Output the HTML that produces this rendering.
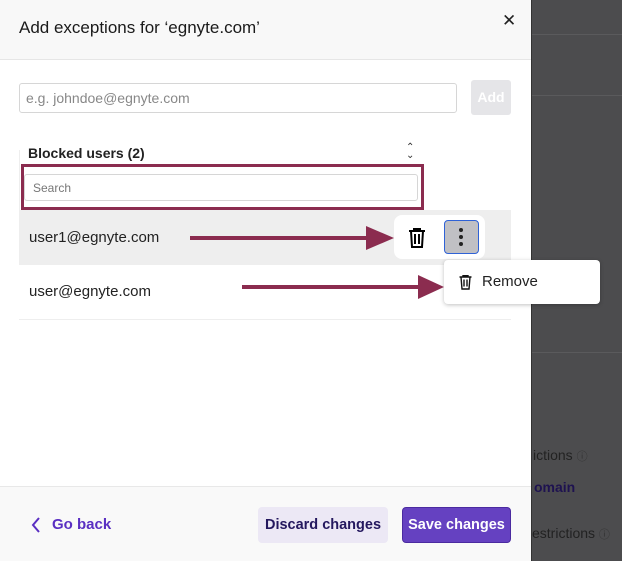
<!DOCTYPE html>
<html><head><style>
*{box-sizing:border-box;margin:0;padding:0}
body{width:622px;height:561px;overflow:hidden;background:#4c4c4e;font-family:"Liberation Sans",sans-serif;position:relative}
.a{position:absolute}
</style></head><body>
<div class="a" style="left:531px;top:34px;width:91px;height:1px;background:#5a5a5c"></div>
<div class="a" style="left:531px;top:95px;width:91px;height:1px;background:#5a5a5c"></div>
<div class="a" style="left:531px;top:352px;width:91px;height:1px;background:#5a5a5c"></div>
<div class="a" style="left:533px;top:447px;font-size:14px;color:#222">ictions <span style="font-size:11px;color:#333">ⓘ</span></div>
<div class="a" style="left:534px;top:479px;font-size:14px;font-weight:bold;color:#1e1250">omain</div>
<div class="a" style="left:532px;top:525px;font-size:14px;color:#222">estrictions <span style="font-size:11px;color:#333">ⓘ</span></div>

<div class="a" style="left:0;top:0;width:532px;height:561px;background:#fff;border-right:1px solid #333"></div>
<div class="a" style="left:0;top:0;width:531px;height:60px;background:#f8f8f8;border-bottom:1px solid #e6e6e6"></div>
<div class="a" style="left:19px;top:18px;font-size:17px;color:#1a1a1a">Add exceptions for ‘egnyte.com’</div>
<div class="a" style="left:502px;top:11px;font-size:17px;color:#222">✕</div>

<div class="a" style="left:19px;top:83px;width:438px;height:30px;border:1px solid #d6d6d6;border-radius:3px;font-size:14px;color:#888;padding:6px 0 0 6px">e.g. johndoe@egnyte.com</div>
<div class="a" style="left:471px;top:80px;width:40px;height:35px;background:#e5e5e8;border-radius:3px;color:#fff;font-weight:bold;font-size:14px;text-align:center;line-height:35px">Add</div>

<div class="a" style="left:28px;top:145px;font-size:14px;font-weight:bold;color:#222">Blocked users (2)</div>
<div class="a" style="left:406px;top:144px;font-size:10px;line-height:8px;color:#333">⌃<br>⌄</div>
<div class="a" style="left:19px;top:150px;width:1px;height:60px;background:#eee"></div>
<div class="a" style="left:21px;top:164px;width:403px;height:46px;border:3px solid #8b2c4f"></div>
<div class="a" style="left:24px;top:174px;width:394px;height:27px;border:1px solid #d6d6d6;border-radius:3px;font-size:12px;color:#777;padding:6px 0 0 8px">Search</div>

<div class="a" style="left:19px;top:210px;width:492px;height:55px;background:#eeeeee"></div>
<div class="a" style="left:29px;top:229px;font-size:15px;color:#222">user1@egnyte.com</div>
<div class="a" style="left:19px;top:265px;width:492px;height:55px;border-bottom:1px solid #eee"></div>
<div class="a" style="left:29px;top:283px;font-size:15px;color:#222">user@egnyte.com</div>

<div class="a" style="left:394px;top:215px;width:91px;height:44px;background:#fff;border-radius:8px"></div>
<svg class="a" style="left:408px;top:228px" width="18" height="20" viewBox="0 0 18 20"><path d="M1 3h16M6 3V1h6v2M3 3l1 16h10l1-16M7 6v10M11 6v10" fill="none" stroke="#000" stroke-width="2"/></svg>
<div class="a" style="left:444px;top:220px;width:35px;height:34px;background:#c0c0c4;border:1.5px solid #2f62d6;border-radius:4px"></div>
<div class="a" style="left:459px;top:228px;width:4px;height:4px;border-radius:2px;background:#222"></div>
<div class="a" style="left:459px;top:235px;width:4px;height:4px;border-radius:2px;background:#222"></div>
<div class="a" style="left:459px;top:242px;width:4px;height:4px;border-radius:2px;background:#222"></div>

<div class="a" style="left:444px;top:260px;width:156px;height:44px;background:#fff;border-radius:4px;box-shadow:0 1px 4px rgba(0,0,0,.25)"></div>
<svg class="a" style="left:459px;top:275px" width="13" height="15" viewBox="0 0 13 15"><path d="M0.5 2h12M4 2V0.7h5V2M2 2l1 12h7l1-12M5 4.5v7M8 4.5v7" fill="none" stroke="#111" stroke-width="1.4"/></svg>
<div class="a" style="left:482px;top:273px;font-size:15px;color:#222">Remove</div>

<svg class="a" style="left:0;top:0" width="622" height="561"><g fill="#8b2c4f"><rect x="190" y="236" width="180" height="4"/><path d="M366 226L394 238L366 250Z"/><rect x="242" y="285" width="180" height="4"/><path d="M418 275L444 287L418 299Z"/></g></svg>

<div class="a" style="left:0;top:486px;width:531px;height:75px;background:#f9f9f9;border-top:1px solid #e8e8e8"></div>
<svg class="a" style="left:31px;top:517px" width="10" height="16" viewBox="0 0 10 16"><path d="M8 1L2 8l6 7" fill="none" stroke="#5a2fc2" stroke-width="2"/></svg>
<div class="a" style="left:52px;top:516px;font-size:15px;font-weight:bold;color:#5a2fc2">Go back</div>
<div class="a" style="left:258px;top:507px;width:130px;height:36px;background:#ece8f5;border-radius:4px;font-size:14.5px;font-weight:bold;color:#24185e;text-align:center;line-height:36px">Discard changes</div>
<div class="a" style="left:402px;top:507px;width:109px;height:36px;background:#6541c1;border:1px solid #4b2ba0;border-radius:4px;font-size:14.5px;font-weight:bold;color:#fff;text-align:center;line-height:34px">Save changes</div>
</body></html>
